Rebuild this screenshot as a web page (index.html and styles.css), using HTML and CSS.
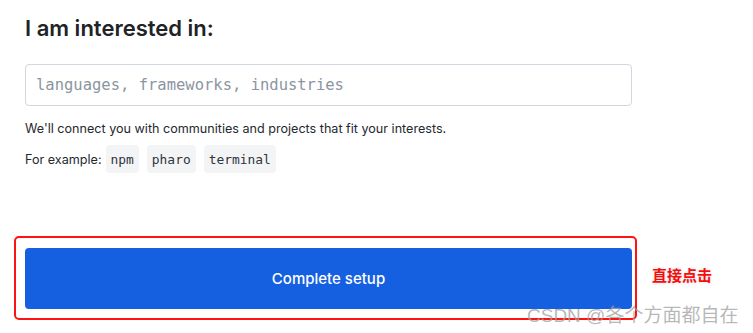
FILE: index.html
```html
<!DOCTYPE html>
<html lang="en">
<head>
    <meta charset="UTF-8">
    <meta name="viewport" content="width=device-width, initial-scale=1.0">
    <title>Interests</title>
    <link rel="stylesheet" href="styles.css">
</head>
<body>
    <!-- interests -->
    <section class="setup">
        <h2 class="setup__title">I am interested in:</h2>
        <input type="text" class="setup__input" placeholder="languages, frameworks, industries">
        <p class="setup__note">We'll connect you with communities and projects that fit your interests.</p>
        <div class="setup__examples">
            <span>For example:</span>
            <code class="chip">npm</code>
            <code class="chip">pharo</code>
            <code class="chip">terminal</code>
        </div>

        <!-- submit -->
        <div class="submitRow">
            <div class="mark">
                <button class="btn btn--primary">Complete setup</button>
            </div>
            <span class="hint">直接点击</span>
        </div>
    </section>

    <span class="watermark">CSDN @各个方面都自在</span>
</body>
</html>
```

FILE: styles.css
```css
* {box-sizing: border-box;}
body {margin: 0; background: #fff; color: #24292f; font-family: Inter, "Noto Sans", sans-serif;}

.setup {padding: 13px 0 0 25px;}
.setup__title {margin: 0 0 20px; font-size: 22px; font-weight: 600; line-height: 31px; color: #1f2328;}
.setup__input {
    display: block; width: 607px; height: 42px; padding: 0 10px;
    border: 1px solid #d0d7de; border-radius: 4px; background: #fff;
    font-family: "DejaVu Sans Mono", monospace; font-size: 15.5px; outline: none;
}
.setup__input::placeholder {color: #8c959f;}
.setup__note {margin: 14px 0 0; font-size: 12.6px; line-height: 18px;}
.setup__examples {display: flex; align-items: center; gap: 8px; margin-top: 7px; font-size: 12.6px;}
.setup__examples span {margin-right: -4px;}
.chip {
    height: 28px; padding: 0 5px; display: flex; align-items: center;
    background: #f3f4f6; border-radius: 4px;
    font-family: "DejaVu Sans Mono", monospace; font-size: 12.9px; color: #2f353b;
}

.submitRow {display: flex; align-items: center; margin: 63px 0 0 -11px;}
.mark {width: 623px; padding: 10px 3px 9px 9px; border: 2px solid #ff1212; border-radius: 5px;}
.btn {display: block; width: 100%; border: none; cursor: pointer;}
.btn--primary {
    height: 61px; border-radius: 4px; background: #1560e1; color: #fff;
    font-family: Inter, "Noto Sans", sans-serif; font-size: 15px; font-weight: 500;
}
.hint {
    margin-left: 15px; margin-top: -8px; color: #f50d0d; font-weight: 700; font-size: 15px;
    font-family: "Noto Sans CJK SC", sans-serif;
    text-shadow: 0 0 2px #fff, 0 0 3px #ccc;
}

.watermark {
    position: absolute; left: 527px; top: 300px;
    font-family: "Liberation Sans", "Noto Sans CJK SC", sans-serif; font-size: 19px;
    color: rgba(160, 160, 160, .75);
}
```
